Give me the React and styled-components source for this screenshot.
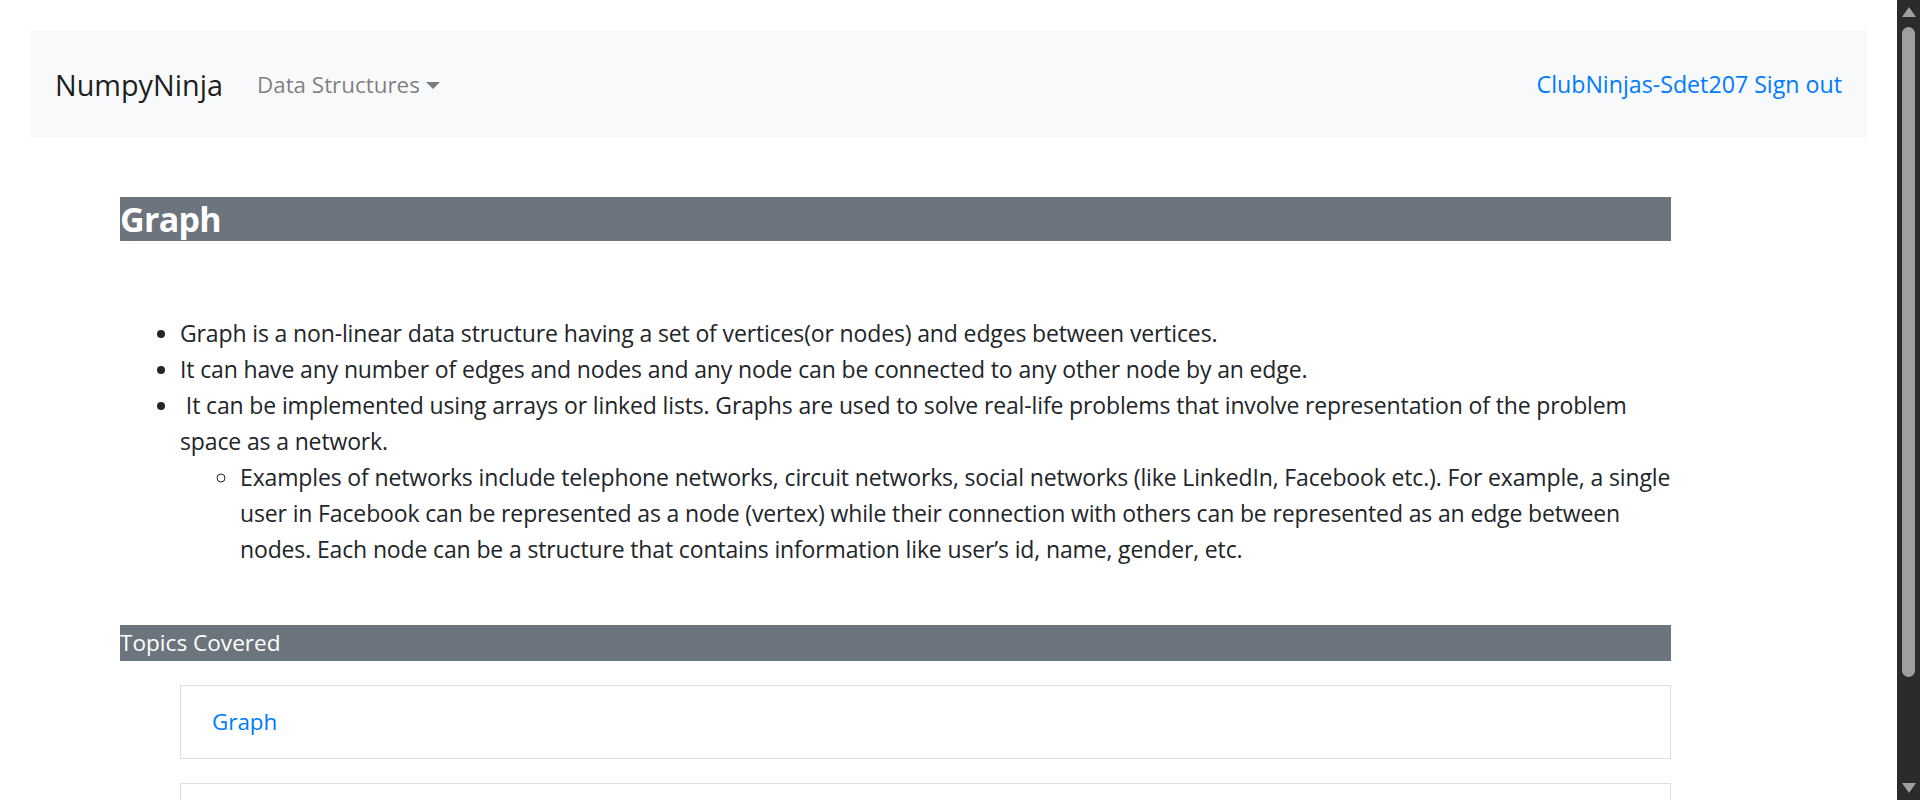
import React from 'react';
import styled, { createGlobalStyle } from 'styled-components';

const FONT = `"Open Sans", "Noto Sans", "Liberation Sans", sans-serif`;

const GlobalStyle = createGlobalStyle`
  body {
    margin: 0;
    font-family: ${FONT};
    color: #212529;
    background: #fff;
  }
`;

const Page = styled.div`
  width: 1897px;
  box-sizing: border-box;
  padding: 30px 30px 71px;
`;

const NavBar = styled.nav`
  display: flex;
  align-items: center;
  height: 108px;
  padding: 0 25px;
  background: #f8f9fa;
`;

const Brand = styled.a`
  font-size: 28.8px;
  color: rgba(0, 0, 0, 0.9);
  text-decoration: none;
  margin-right: 34px;
`;

const DropLink = styled.a`
  display: flex;
  align-items: center;
  gap: 6px;
  font-size: 22.4px;
  color: rgba(0, 0, 0, 0.5);
  text-decoration: none;
`;

const Caret = styled.span`
  width: 0;
  height: 0;
  border-left: 7px solid transparent;
  border-right: 7px solid transparent;
  border-top: 7px solid rgba(0, 0, 0, 0.5);
  margin-top: 2px;
`;

const UserLinks = styled.div`
  margin-left: auto;
  display: flex;
  gap: 6px;
  font-size: 23.2px;
`;

const NavLink = styled.a`
  color: #007bff;
  text-decoration: none;
`;

const Main = styled.main`
  margin: 59px 196px 0 90px;
`;

const TitleBar = styled.h4`
  margin: 0;
  font-size: 34px;
  letter-spacing: -0.7px;
  line-height: 44px;
  font-weight: 700;
  color: #fff;
  background: #6c757d;
`;

const SubBar = styled.h5`
  margin: 0;
  font-size: 22.6px;
  line-height: 36px;
  font-weight: 400;
  color: #fff;
  background: #6c757d;
`;

const List = styled.ul`
  margin: ${p => (p.$nested ? '0 -16px 0 0' : '74px 0 58px')};
  padding-left: 60px;
  font-size: 23px;
  letter-spacing: -0.14px;
  line-height: 36px;
  list-style-type: ${p => (p.$nested ? 'circle' : 'disc')};
`;

const Topics = styled.div`
  display: flex;
  flex-direction: column;
  gap: 24px;
  margin: 24px 0 0 60px;
`;

const Card = styled.div`
  border: 1px solid rgba(0, 0, 0, 0.125);
  padding: 18px 31px;
  font-size: 22.4px;
  line-height: 36px;
`;

/* browser scrollbar seen in the screenshot, laid over the right edge */
const ScrollBar = styled.div`
  position: fixed;
  top: 0;
  right: 0;
  width: 23px;
  height: 100vh;
  background: #2b2b2b;
  display: flex;
  flex-direction: column;
  align-items: center;
`;

const ArrowBtn = styled.div`
  height: 23px;
  width: 23px;
  display: flex;
  justify-content: center;
  align-items: flex-start;
  padding-top: ${p => (p.$down ? '6px' : '7px')};
  box-sizing: border-box;
  margin-top: ${p => (p.$down ? 'auto' : '0')};
`;

const Thumb = styled.div`
  width: 13px;
  height: 650px;
  margin-top: 4px;
  border-radius: 7px;
  background: #9f9f9f;
`;

const topics = ['Graph', 'Graph Representations'];

export default function App() {
  return (
    <Page>
      <GlobalStyle />
      <NavBar>
        <Brand href="#">NumpyNinja</Brand>
        <DropLink href="#">
          Data Structures <Caret />
        </DropLink>
        <UserLinks>
          <NavLink href="#">ClubNinjas-Sdet207</NavLink>
          <NavLink href="#">Sign out</NavLink>
        </UserLinks>
      </NavBar>
      <Main>
        <TitleBar>Graph</TitleBar>
        <List>
          <li>Graph is a non-linear data structure having a set of vertices(or nodes) and edges between vertices.</li>
          <li>It can have any number of edges and nodes and any node can be connected to any other node by an edge.</li>
          <li>
            {'\u00a0'}It can be implemented using arrays or linked lists. Graphs are used to solve real-life problems that involve representation of the problem space as a network.
            <List $nested>
              <li>Examples of networks include telephone networks, circuit networks, social networks (like LinkedIn, Facebook etc.). For example, a single user in Facebook can be represented as a node (vertex) while their connection with others can be represented as an edge between nodes. Each node can be a structure that contains information like user’s id, name, gender, etc.</li>
            </List>
          </li>
        </List>
        <SubBar>Topics Covered</SubBar>
        <Topics>
          {topics.map(t => (
            <Card key={t}>
              <NavLink href="#">{t}</NavLink>
            </Card>
          ))}
        </Topics>
      </Main>
      <ScrollBar>
        <ArrowBtn>
          <svg width="14" height="10" viewBox="0 0 14 10">
            <polygon points="7,0 14,10 0,10" fill="#9f9f9f" />
          </svg>
        </ArrowBtn>
        <Thumb />
        <ArrowBtn $down>
          <svg width="14" height="10" viewBox="0 0 14 10">
            <polygon points="0,0 14,0 7,10" fill="#9f9f9f" />
          </svg>
        </ArrowBtn>
      </ScrollBar>
    </Page>
  );
}
